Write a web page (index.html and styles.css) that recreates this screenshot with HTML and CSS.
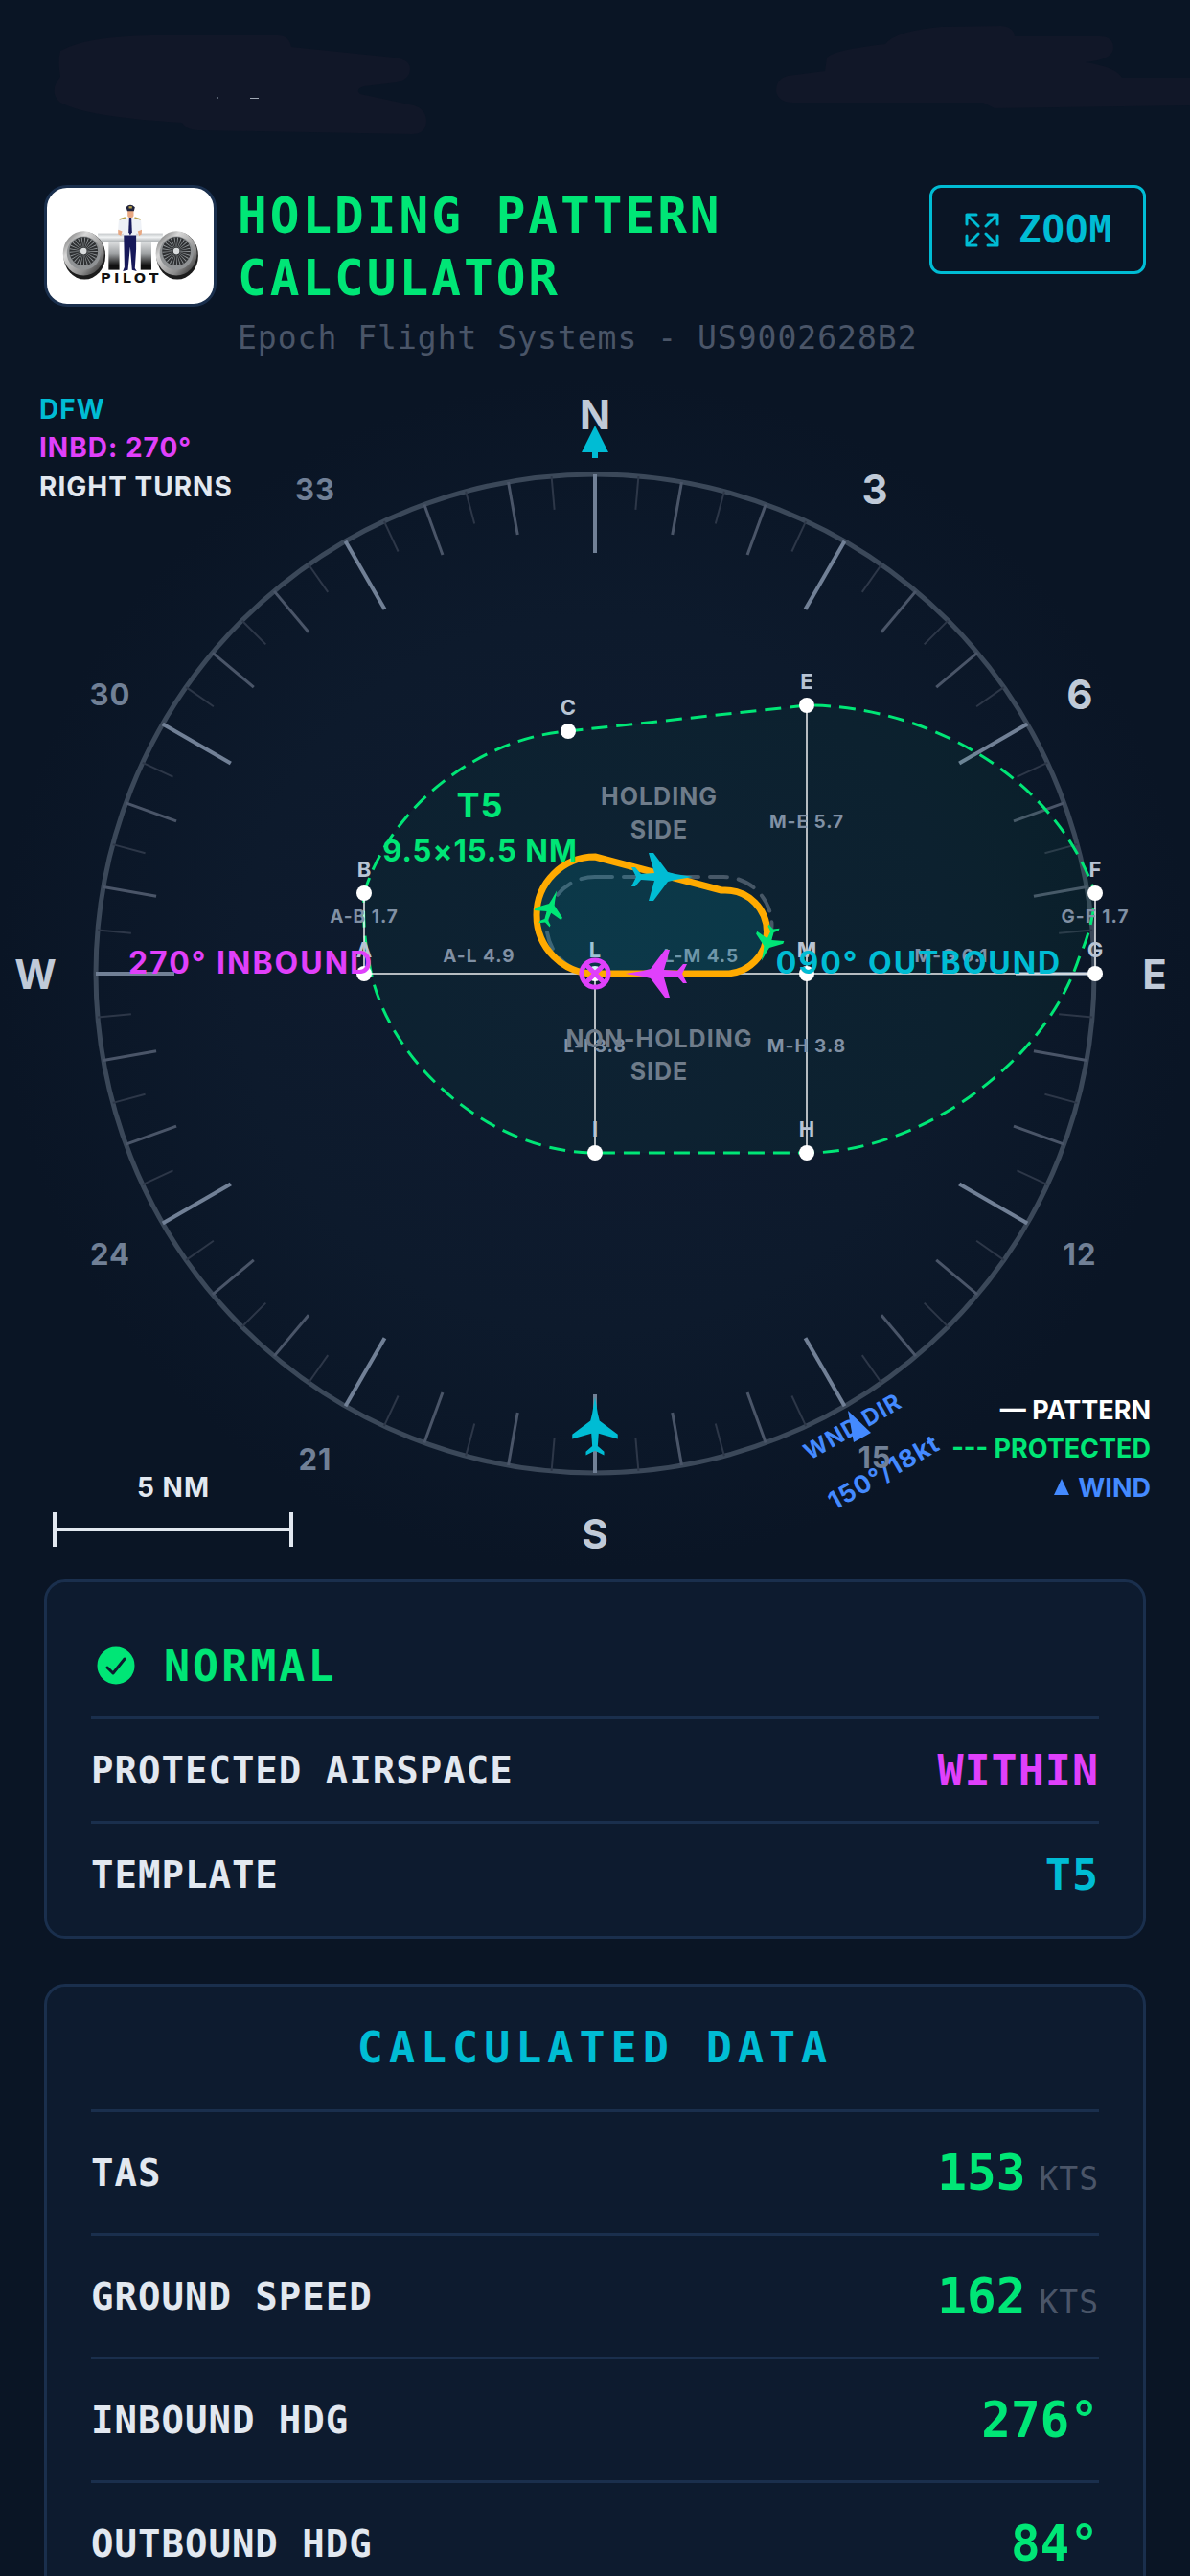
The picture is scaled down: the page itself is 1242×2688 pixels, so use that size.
FILE: index.html
```html
<!DOCTYPE html>
<html lang="en">
<head>
    <meta charset="UTF-8">
    <meta name="viewport" content="width=device-width, initial-scale=1.0">
    <title>Holding Pattern Calculator</title>
    <link rel="stylesheet" href="styles.css">
</head>
<body>
    <div class="status-bar">
        <svg viewBox="0 0 1242 160" aria-hidden="true">
            <path class="smudge" d="M63 53Q90 38 158 37H290Q302 37 304 49L412 60Q428 62 428 72Q428 82 414 86L380 90Q370 93 376 98L432 110Q445 114 445 127Q444 140 430 140L206 136Q194 135 190 128Q90 122 63 107Q50 96 63 80Q60 64 63 53Z"/>
            <path class="smudge" d="M863 60Q870 52 924 46Q935 32 982 28L1045 27Q1058 28 1059 38H1148Q1162 38 1162 50Q1162 62 1133 65Q1165 70 1171 81H1242V110L1038 113L1026 107H828Q812 107 810 95Q810 82 822 79L861 74Z"/>
            <rect x="226" y="101" width="2" height="2" fill="#56606f"/>
            <rect x="261" y="102" width="9" height="1" fill="#a0a8b4"/>
        </svg>
    </div>

    <header class="header">
        <svg class="logo" viewBox="28 46 519 366" role="img" aria-label="Otto Pilot">
            <defs>
                <linearGradient id="metal" x1="0" y1="0" x2="0" y2="1">
                    <stop offset="0" stop-color="#c4c8ca"/>
                    <stop offset="0.4" stop-color="#f2f4f5"/>
                    <stop offset="1" stop-color="#a4a9ac"/>
                </linearGradient>
                <linearGradient id="leg" x1="0" y1="0" x2="0" y2="1">
                    <stop offset="0" stop-color="#e8eaeb"/>
                    <stop offset="0.45" stop-color="#a0a3a5"/>
                    <stop offset="0.85" stop-color="#111"/>
                </linearGradient>
                <linearGradient id="cowl" x1="0" y1="0" x2="1" y2="1">
                    <stop offset="0" stop-color="#555"/>
                    <stop offset="0.3" stop-color="#d8d8d8"/>
                    <stop offset="0.7" stop-color="#8b8b8b"/>
                    <stop offset="1" stop-color="#111"/>
                </linearGradient>
                <g id="engine">
                    <ellipse cx="3" cy="6" rx="66" ry="75" fill="#1c1c1c"/>
                    <ellipse cx="0" cy="-1" rx="65" ry="70" fill="url(#cowl)"/>
                    <circle cx="0" cy="-2" r="53" fill="#8f9294"/>
                    <circle cx="0" cy="-8" r="45" fill="#2e3032"/>
                    <circle cx="0" cy="-8" r="28" fill="none" stroke="#92979a" stroke-width="32" stroke-dasharray="2 5"/>
                    <circle cx="0" cy="-8" r="10" fill="#d9dcdd"/>
                </g>
            </defs>
            <rect x="219" y="210" width="34" height="95" fill="url(#leg)"/>
            <rect x="320" y="210" width="34" height="95" fill="url(#leg)"/>
            <rect x="185" y="190" width="205" height="28" fill="url(#metal)"/>
            <use href="#engine" x="140" y="254"/>
            <use href="#engine" x="433" y="254"/>
            <path d="M267 190H306V240L302 300L308 309L293 305L287 232L280 305L264 309L269 296Z" fill="#17195a"/>
            <path d="M272 140L251 148L248 188L256 196L266 186V196H307V186L316 196L324 188L321 148L301 140Z" fill="#eef1f6"/>
            <path d="M249 178L262 184L258 197L249 193ZM324 178L311 184L315 197L323 193Z" fill="#e8a882"/>
            <path d="M284 140H291L293 186L287 196L282 186Z" fill="#17195a"/>
            <path d="M253 146L272 140M301 140L320 146" stroke="#b9a24b" stroke-width="5"/>
            <rect x="279" y="112" width="19" height="28" rx="8" fill="#e8a882"/>
            <path d="M274 107Q287 92 302 107L299 119H278Z" fill="#20233c"/>
            <rect x="283" y="104" width="10" height="7" fill="#b9a24b"/>
            <text class="logo-text" x="290" y="347">PILOT</text>
        </svg>
        <div class="title-block">
            <h1>HOLDING PATTERN CALCULATOR</h1>
            <p class="subtitle">Epoch Flight Systems - US9002628B2</p>
        </div>
        <button class="zoom-btn" type="button">
            <svg viewBox="0 0 36 36" aria-hidden="true">
                <path d="M2 12V2H12M24 2H34V12M34 24V34H24M12 34H2V24M2 2L14 14M34 2L22 14M34 34L22 22M2 34L14 22"/>
            </svg>
            ZOOM
        </button>
    </header>

    <!-- viewBox starts at the compass corner, compass centre is 621,621 -->
    <svg class="compass" viewBox="0 0 1242 1242" role="img" aria-label="Holding pattern compass">
        <defs>
            <radialGradient id="scope">
                <stop offset="0" stop-color="#0f1b30"/>
                <stop offset="0.6" stop-color="#0d1a2c"/>
                <stop offset="1" stop-color="#0a1525"/>
            </radialGradient>
            <path id="plane" d="M35 0L17 -3L9 -5L-6 -25H-11L-5 -4L-19 -3L-25 -10H-29L-24 0L-29 10H-25L-19 3L-5 4L-11 25H-6L9 5L17 3Z"/>
        </defs>
        <circle cx="621" cy="621" r="621" fill="url(#scope)"/>
        <circle class="ring" cx="621" cy="621" r="521"/>
        <g id="ticks"></g>
        <g id="headings"></g>
        <path d="M621 49L635 77H624V83H618V77H607Z" fill="#00bcd4"/>

        <path class="protected" d="M380 537C407 447 500 375 593 368L842 341C965 341 1100 413 1143 537Q1141 572 1126 605C1090 715 960 808 842 808H621C510 808 400 710 385 608Q378 575 380 537Z"/>

        <g class="template-lines">
            <path d="M380 537V621H1143V537M842 341V808M621 621V808"/>
        </g>
        <g class="segment">
            <text x="380" y="568">A-B 1.7</text>
            <text x="500" y="609">A-L 4.9</text>
            <text x="732" y="609">L-M 4.5</text>
            <text x="993" y="609">M-G 6.1</text>
            <text x="842" y="469">M-E 5.7</text>
            <text x="842" y="703">M-H 3.8</text>
            <text x="621" y="703">L-I 3.8</text>
            <text x="1143" y="568">G-F 1.7</text>
        </g>
        <g id="points"></g>

        <path class="standard" d="M621 520H755A50 50 0 0 1 755 621H621A50 50 0 0 1 621 520Z"/>
        <path class="track" d="M621 499L753 534H757A43 43 0 0 1 757 621H621A61 61 0 0 1 621 499Z"/>

        <g class="side">
            <text x="688" y="445">HOLDING</text>
            <text x="688" y="480">SIDE</text>
            <text x="688" y="698">NON-HOLDING</text>
            <text x="688" y="732">SIDE</text>
        </g>

        <use href="#plane" transform="translate(688 520)" fill="#00bcd4"/>
        <use href="#plane" transform="translate(688 621) rotate(180)" fill="#e040fb"/>
        <use href="#plane" transform="translate(574 554) rotate(-70) scale(0.6)" fill="#00e676"/>
        <use href="#plane" transform="translate(802 588) rotate(110) scale(0.6)" fill="#00e676"/>
        <use href="#plane" transform="translate(621 1096) rotate(-90) scale(0.95)" fill="#00bcd4"/>

        <g class="fix">
            <circle cx="621" cy="621" r="14"/>
            <path d="M612 612L630 630M630 612L612 630"/>
        </g>

        <text class="template-name" x="501" y="458">T5</text>
        <text class="template-size" x="501" y="504">9.5×15.5 NM</text>
        <text class="course inbound" x="262" y="621">270° INBOUND</text>
        <text class="course outbound" x="959" y="621">090° OUTBOUND</text>

        <g class="wind">
            <text class="wind-small" transform="translate(894 1101) rotate(-30)">WND DIR</text>
            <text transform="translate(927 1149) rotate(-30)">150°/18kt</text>
            <path d="M885 1077L909 1100L891 1110Z"/>
        </g>
        <text class="heading minor" x="913" y="1137">15</text>

        <g class="info">
            <text class="outbound" x="41" y="42">DFW</text>
            <text class="inbound" x="41" y="82">INBD: 270°</text>
            <text class="light" x="41" y="123">RIGHT TURNS</text>
        </g>
        <g class="legend">
            <text class="white" x="1201" y="1086">— PATTERN</text>
            <text class="protected-text" x="1201" y="1126">--- PROTECTED</text>
            <text x="1201" y="1167">WIND</text>
            <path d="M1108 1148L1116 1165H1100Z"/>
        </g>
        <path class="scale-bar" d="M57 1183V1219M304 1183V1219M57 1201H304"/>
        <text class="info light scale-text" x="181" y="1167">5 NM</text>
    </svg>

    <main class="panels">
        <section class="card status-card">
            <div class="row status">
                <svg viewBox="0 0 52 52" aria-hidden="true">
                    <circle cx="26" cy="26" r="21" fill="#00e676"/>
                    <path d="M17 28L23 34L35 19"/>
                </svg>
                NORMAL
            </div>
            <div class="row">
                <span>PROTECTED AIRSPACE</span>
                <strong class="result magenta">WITHIN</strong>
            </div>
            <div class="row">
                <span>TEMPLATE</span>
                <strong class="result cyan">T5</strong>
            </div>
        </section>

        <section class="card data-card">
            <h2>CALCULATED DATA</h2>
            <div class="row">
                <span>TAS</span>
                <strong class="value">153<small>KTS</small></strong>
            </div>
            <div class="row">
                <span>GROUND SPEED</span>
                <strong class="value">162<small>KTS</small></strong>
            </div>
            <div class="row">
                <span>INBOUND HDG</span>
                <strong class="value">276°</strong>
            </div>
            <div class="row">
                <span>OUTBOUND HDG</span>
                <strong class="value">84°</strong>
            </div>
        </section>
    </main>

    <script>
        const svgNS = "http://www.w3.org/2000/svg";
        const CENTER = 621;
        const RADIUS = 521;

        function add(parentId, tag, attrs, text) {
            const el = document.createElementNS(svgNS, tag);
            for (let key in attrs) {
                el.setAttribute(key, attrs[key]);
            }
            if (text) el.textContent = text;
            document.getElementById(parentId).appendChild(el);
        }

        // Compass ticks every 5 degrees
        for (let deg = 0; deg < 360; deg += 5) {
            let type = "t5", len = 35;
            if (deg % 30 === 0) { type = "t30"; len = 82; }
            else if (deg % 10 === 0) { type = "t10"; len = 56; }
            add("ticks", "line", {
                class: type,
                x1: CENTER, y1: CENTER - RADIUS,
                x2: CENTER, y2: CENTER - RADIUS + len,
                transform: `rotate(${deg} ${CENTER} ${CENTER})`
            });
        }

        // Heading labels, 15 is drawn later on top of the wind text
        const headings = ["N", "3", "6", "E", "12", "", "S", "21", "24", "W", "30", "33"];
        headings.forEach((label, i) => {
            if (!label) return;
            const a = i * Math.PI / 6;
            const major = label.length === 1;
            add("headings", "text", {
                class: major ? "heading" : "heading minor",
                x: Math.round(CENTER + 584 * Math.sin(a)),
                y: Math.round(CENTER - 584 * Math.cos(a)) + (major ? 16 : 12)
            }, label);
        });

        // Template points
        const points = {
            A: [380, 621], B: [380, 537], C: [593, 368], E: [842, 341], F: [1143, 537],
            G: [1143, 621], H: [842, 808], I: [621, 808], L: [621, 621], M: [842, 621]
        };
        for (let name in points) {
            const [x, y] = points[name];
            add("points", "circle", { cx: x, cy: y, r: 8 });
            add("points", "text", { x: x, y: y - 17 }, name);
        }
    </script>
</body>
</html>
```

FILE: styles.css
```css
body {
    margin: 0;
    background: #0a1525;
    color: #e2e8f0;
    font-family: "DejaVu Sans Mono", "Liberation Mono", monospace;
    overflow-x: hidden;
}

.status-bar {
    height: 193px;
}

.status-bar svg {
    display: block;
    width: 100%;
}

.smudge {
    fill: #111728;
}

/* Header */
.header {
    display: flex;
    align-items: flex-start;
    gap: 22px;
    padding: 0 46px;
}

.logo {
    flex: none;
    box-sizing: border-box;
    width: 180px;
    height: 127px;
    background: white;
    border: 3px solid #1a2f4d;
    border-radius: 24px;
}

.logo-text {
    font: 900 44px "DejaVu Sans", sans-serif;
    letter-spacing: 10px;
    text-anchor: middle;
    fill: #111;
}

.title-block {
    flex: 1;
    min-width: 0;
}

h1 {
    margin: 0;
    color: #00e676;
    font-size: 51px;
    line-height: 65px;
    letter-spacing: 3px;
}

.subtitle {
    margin: 10px 0 0;
    color: #4a5568;
    font-size: 33px;
    line-height: 40px;
    letter-spacing: 1px;
    white-space: nowrap;
}

.zoom-btn {
    flex: none;
    display: flex;
    align-items: center;
    gap: 20px;
    box-sizing: border-box;
    height: 93px;
    padding: 0 32px 0 34px;
    background: transparent;
    border: 3px solid #00bcd4;
    border-radius: 12px;
    color: #00bcd4;
    font: bold 39px "DejaVu Sans Mono", monospace;
    letter-spacing: 1px;
}

.zoom-btn svg {
    width: 36px;
    height: 36px;
    fill: none;
    stroke: #00bcd4;
    stroke-width: 3;
    stroke-linecap: round;
    stroke-linejoin: round;
}

/* Compass */
.compass {
    display: block;
    width: 100%;
    margin-top: 22px;
    font-family: Inter, sans-serif;
    font-weight: 700;
    text-anchor: middle;
}

.ring {
    fill: none;
    stroke: #3b4859;
    stroke-width: 5;
}

.t30 {
    stroke: #718096;
    stroke-width: 4;
}

.t10 {
    stroke: #4a5568;
    stroke-width: 3;
}

.t5 {
    stroke: #2d3748;
    stroke-width: 2;
}

.heading {
    fill: #c0cad8;
    font-size: 42px;
}

.minor {
    fill: #718096;
    font-size: 31px;
    letter-spacing: 1px;
}

.protected {
    fill: rgba(0, 230, 118, 0.04);
    stroke: #00e676;
    stroke-width: 3;
    stroke-dasharray: 17 9;
}

.template-lines {
    fill: none;
    stroke: rgba(255, 255, 255, 0.7);
    stroke-width: 2;
}

.segment {
    fill: #8090a4;
    font-size: 19px;
    letter-spacing: 1px;
}

#points circle {
    fill: white;
}

#points text {
    fill: #b8c4d4;
    font-size: 22px;
}

.standard {
    fill: none;
    stroke: rgba(160, 170, 185, 0.4);
    stroke-width: 4;
    stroke-dasharray: 18 12;
    stroke-linecap: round;
}

.track {
    fill: rgba(0, 188, 212, 0.14);
    stroke: #ffaa00;
    stroke-width: 7;
    stroke-linejoin: round;
}

.side {
    fill: #6f7c8a;
    font-size: 25px;
    letter-spacing: 1px;
}

.fix {
    fill: none;
    stroke: #e040fb;
    stroke-width: 5;
}

.template-name {
    fill: #00e676;
    font-size: 36px;
    letter-spacing: 1px;
}

.template-size {
    fill: #00e676;
    font-size: 31px;
    letter-spacing: 1px;
}

.course {
    font-size: 32px;
    letter-spacing: 2px;
}

.protected-text {
    fill: #00e676;
}

.inbound {
    fill: #e040fb;
}

.outbound {
    fill: #00bcd4;
}

.wind {
    fill: #448aff;
    font-size: 26px;
    letter-spacing: 1px;
}

.wind-small {
    font-size: 24px;
}

.info {
    font-size: 28px;
    letter-spacing: 1px;
    text-anchor: start;
}

.legend {
    font-size: 27px;
    text-anchor: end;
    fill: #448aff;
}

.scale-text {
    text-anchor: middle;
}

.light {
    fill: #e2e8f0;
}

.white {
    fill: white;
}

.scale-bar {
    fill: none;
    stroke: #e2e8f0;
    stroke-width: 4;
}

/* Panels */
.panels {
    display: flex;
    flex-direction: column;
    gap: 47px;
    margin: 11px 46px 46px;
}

.card {
    background: #0d1b2f;
    border: 3px solid #1a2f4d;
    border-radius: 22px;
    padding: 0 46px;
}

.status-card {
    padding-top: 34px;
    padding-bottom: 11px;
}

.row {
    display: flex;
    align-items: center;
    justify-content: space-between;
    height: 106px;
    font-size: 39px;
    font-weight: bold;
    letter-spacing: 1px;
}

.row + .row,
.data-card .row {
    border-top: 3px solid #1a2f4d;
}

.data-card .row {
    height: 126px;
}

.status {
    justify-content: flex-start;
    gap: 24px;
    color: #00e676;
    font-size: 45px;
    letter-spacing: 3px;
}

.status svg {
    width: 52px;
    height: 52px;
    fill: none;
    stroke: #0d1b2f;
    stroke-width: 3;
    stroke-linecap: round;
    stroke-linejoin: round;
}

.result {
    font-size: 45px;
    letter-spacing: 1px;
}

.magenta {
    color: #e040fb;
}

.cyan {
    color: #00bcd4;
}

h2 {
    margin: 0;
    color: #00bcd4;
    font-size: 45px;
    line-height: 128px;
    letter-spacing: 6px;
    text-align: center;
}

.value {
    color: #00e676;
    font-size: 51px;
    letter-spacing: 0;
}

.value small {
    margin-left: 14px;
    color: #4a5568;
    font-size: 33px;
    font-weight: normal;
    letter-spacing: 1px;
}
```
